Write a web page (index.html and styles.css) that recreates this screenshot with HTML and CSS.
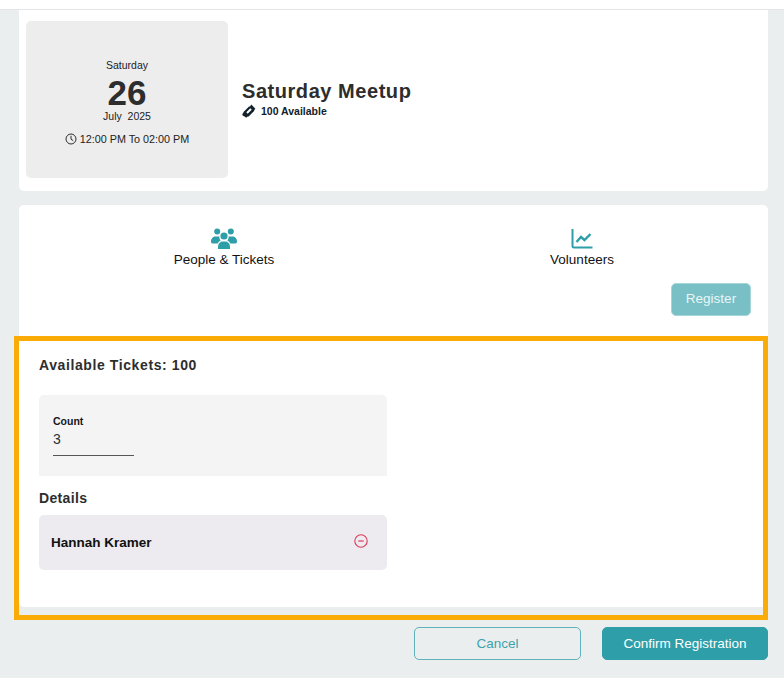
FILE: index.html
```html
<!DOCTYPE html>
<html lang="en">
<head>
<meta charset="utf-8">
<title>Saturday Meetup</title>
<link rel="stylesheet" href="styles.css">
</head>
<body>
<div class="topbar"></div>
<main class="page">
  <section class="card event">
    <div class="date">
      <div class="weekday">Saturday</div>
      <div class="day">26</div>
      <div class="month">July&nbsp; 2025</div>
      <div class="time">
        <svg class="clock" viewBox="0 0 12 12" width="12" height="12"><circle cx="6" cy="6" r="5" fill="none" stroke="#2d2d2d" stroke-width="1"/><path d="M6 2.800V6.200L8.200 7.600" fill="none" stroke="#2d2d2d" stroke-width="1"/></svg>
        <span>12:00 PM To 02:00 PM</span>
      </div>
    </div>
    <div class="info">
      <h1 class="title">Saturday Meetup</h1>
      <div class="avail">
        <svg viewBox="0 0 14 14" width="14" height="14"><path fill="#12212b" fill-rule="evenodd" d="M9.300.6l4.100 4.100-1.100 1.200-.2 1-5.500 5.500-1 .2-1 1-1.200-.3-.7-.9-1.200-.3-.9-.7L.3 10.100l1-1 .2-1L7 2.600l1-.2 1.300-1.800zM8.300 4.300L4.300 8.300l1.400 1.400 4-4-1.400-1.400z"/></svg>
        <span>100 Available</span>
      </div>
    </div>
  </section>

  <section class="card panel">
    <div class="tabs">
      <div class="tab">
        <svg viewBox="0 0 26 21" width="26" height="21"><g fill="#2e9ea9"><circle cx="6.200" cy="3.400" r="3"/><circle cx="19.800" cy="3.400" r="3"/><circle cx="13" cy="8" r="3.600"/><path d="M0 13.600C0 10.600 2 8.400 4.200 8.400h3.400c.3 0 .6.1.8.2-.2 1.600.4 3 1.400 4-1.500.8-2.500 1.700-3 3H1.500C.6 15.600 0 14.800 0 13.600z"/><path d="M26 13.600c0-3-2-5.200-4.200-5.200h-3.400c-.3 0-.6.1-.8.2.2 1.600-.4 3-1.400 4 1.500.8 2.500 1.700 3 3h5.300c.9 0 1.500-.8 1.500-2z"/><path d="M7 18.800c0-3 2.200-5.400 4.400-5.400h3.200c2.200 0 4.400 2.400 4.400 5.400V21H7z"/></g></svg>
        <span class="tab-label">People &amp; Tickets</span>
      </div>
      <div class="tab">
        <svg viewBox="0 0 22 21" width="22" height="21"><g fill="none" stroke="#2e9ea9"><path stroke-width="2" d="M1.500 1v17a1.500 1.500 0 0 0 1.500 1.500h18.500"/><path stroke-width="2.400" d="M5.500 14l4.500-5 3.500 3 6-6"/></g></svg>
        <span class="tab-label">Volunteers</span>
      </div>
    </div>
    <div class="register-row"><button class="btn register" type="button">Register</button></div>
    <div class="form">
      <h2 class="avail-title">Available Tickets: 100</h2>
      <div class="count-box">
        <label class="count-label">Count</label>
        <div class="count-value">3</div>
      </div>
      <h3 class="details">Details</h3>
      <div class="person">
        <span class="person-name">Hannah Kramer</span>
        <svg viewBox="0 0 14 14" width="14" height="14"><circle cx="7" cy="7" r="6.200" fill="none" stroke="#dc3a5a" stroke-width="1.100"/><path d="M4.300 7h5.400" stroke="#dc3a5a" stroke-width="1.200"/></svg>
      </div>
    </div>
    <div class="highlight"></div>
  </section>

  <div class="actions">
    <button class="btn cancel" type="button">Cancel</button>
    <button class="btn confirm" type="button">Confirm Registration</button>
  </div>
</main>
</body>
</html>
```
FILE: styles.css
```css
* { box-sizing: border-box; }
html, body { margin: 0; padding: 0; }
body {
  background: #ebeeef;
  font-family: "Liberation Sans", Arial, sans-serif;
  color: #2d2d2d;
  height: 678px;
  overflow: hidden;
}
.topbar {
  height: 10px;
  background: #fff;
  border-bottom: 1px solid #e3e5e7;
}
.page { padding: 0 16px 0 19px; }
.card { background: #fff; border-radius: 5px; }
.event {
  display: flex;
  align-items: center;
  gap: 14px;
  height: 181px;
  padding: 11px 7px 13px;
  border-radius: 0 0 5px 5px;
}
.date {
  width: 202px;
  height: 157px;
  background: #ededed;
  border-radius: 5px;
  display: flex;
  flex-direction: column;
  align-items: center;
  padding-top: 38px;
  font-size: 10.500px;
  color: #222;
}
.weekday { line-height: 13px; }
.day {
  margin-top: 4px;
  font-size: 35px;
  font-weight: 700;
  line-height: 34px;
  color: #2d2d2d;
}
.month { line-height: 12px; }
.time {
  display: flex;
  align-items: center;
  gap: 3px;
  margin-top: 10px;
  font-size: 10.800px;
  line-height: 14px;
}
.info { margin-top: -3px; }
.title {
  margin: 0;
  font-size: 20px;
  line-height: 24px;
  font-weight: 700;
  letter-spacing: 0.550px;
  color: #2d2d2d;
}
.avail {
  display: flex;
  align-items: center;
  gap: 5px;
  margin-top: 1px;
  font-size: 10.500px;
  font-weight: 700;
  color: #12212b;
  line-height: 14px;
}
.panel {
  position: relative;
  margin-top: 14px;
  height: 402px;
}
.tabs {
  display: grid;
  grid-template-columns: 410px 306px;
  padding: 23px 0 0;
}
.tab {
  display: flex;
  flex-direction: column;
  align-items: center;
  gap: 3px;
}
.tab-label { font-size: 13.500px; line-height: 16px; color: #111; }
.register-row {
  display: flex;
  justify-content: flex-end;
  padding: 15px 17px 0 0;
}
.btn {
  font-family: inherit;
  font-size: 13.500px;
  border-radius: 5px;
  height: 33px;
  padding: 0;
}
.register {
  width: 80px;
  padding-bottom: 2px;
  background: #78c0c6;
  border: 1px solid #a6d6da;
  color: #e9f5f6;
}
.form { padding: 40px 0 0 20px; }
.avail-title {
  margin: 0;
  font-size: 14px;
  line-height: 18px;
  font-weight: 700;
  letter-spacing: 0.600px;
  color: #2d2d2d;
}
.count-box {
  width: 348px;
  height: 81px;
  margin-top: 21px;
  padding: 20px 0 0 14px;
  background: #f4f4f4;
  border-radius: 5px 5px 0 0;
}
.count-label {
  display: block;
  font-size: 10.500px;
  font-weight: 700;
  line-height: 13px;
  color: #16181a;
}
.count-value {
  width: 81px;
  height: 28px;
  padding-top: 2px;
  font-size: 14px;
  line-height: 18px;
  color: #29323a;
  border-bottom: 1px solid #555;
}
.details {
  margin: 13px 0 0;
  font-size: 14px;
  line-height: 18px;
  font-weight: 700;
  letter-spacing: 0.350px;
}
.person {
  width: 348px;
  height: 55px;
  margin-top: 8px;
  padding: 0 19px 0 12px;
  display: flex;
  align-items: center;
  justify-content: space-between;
  background: #edebf0;
  border-radius: 5px;
  font-size: 13.500px;
  font-weight: 700;
  color: #111;
}
.person-name { margin-top: -1px; }
.person svg { margin-top: -3px; }
.highlight {
  position: absolute;
  left: -5px;
  top: 131px;
  width: 754px;
  height: 284px;
  border: 5px solid #fbab05;
  pointer-events: none;
}
.actions {
  display: flex;
  justify-content: flex-end;
  gap: 21px;
  margin-top: 20px;
}
.cancel {
  width: 167px;
  background: transparent;
  border: 1px solid #5eb3bb;
  color: #3da2ac;
}
.confirm {
  width: 166px;
  background: #2e9ea9;
  border: 1px solid #2e9ea9;
  color: #fff;
}
```
